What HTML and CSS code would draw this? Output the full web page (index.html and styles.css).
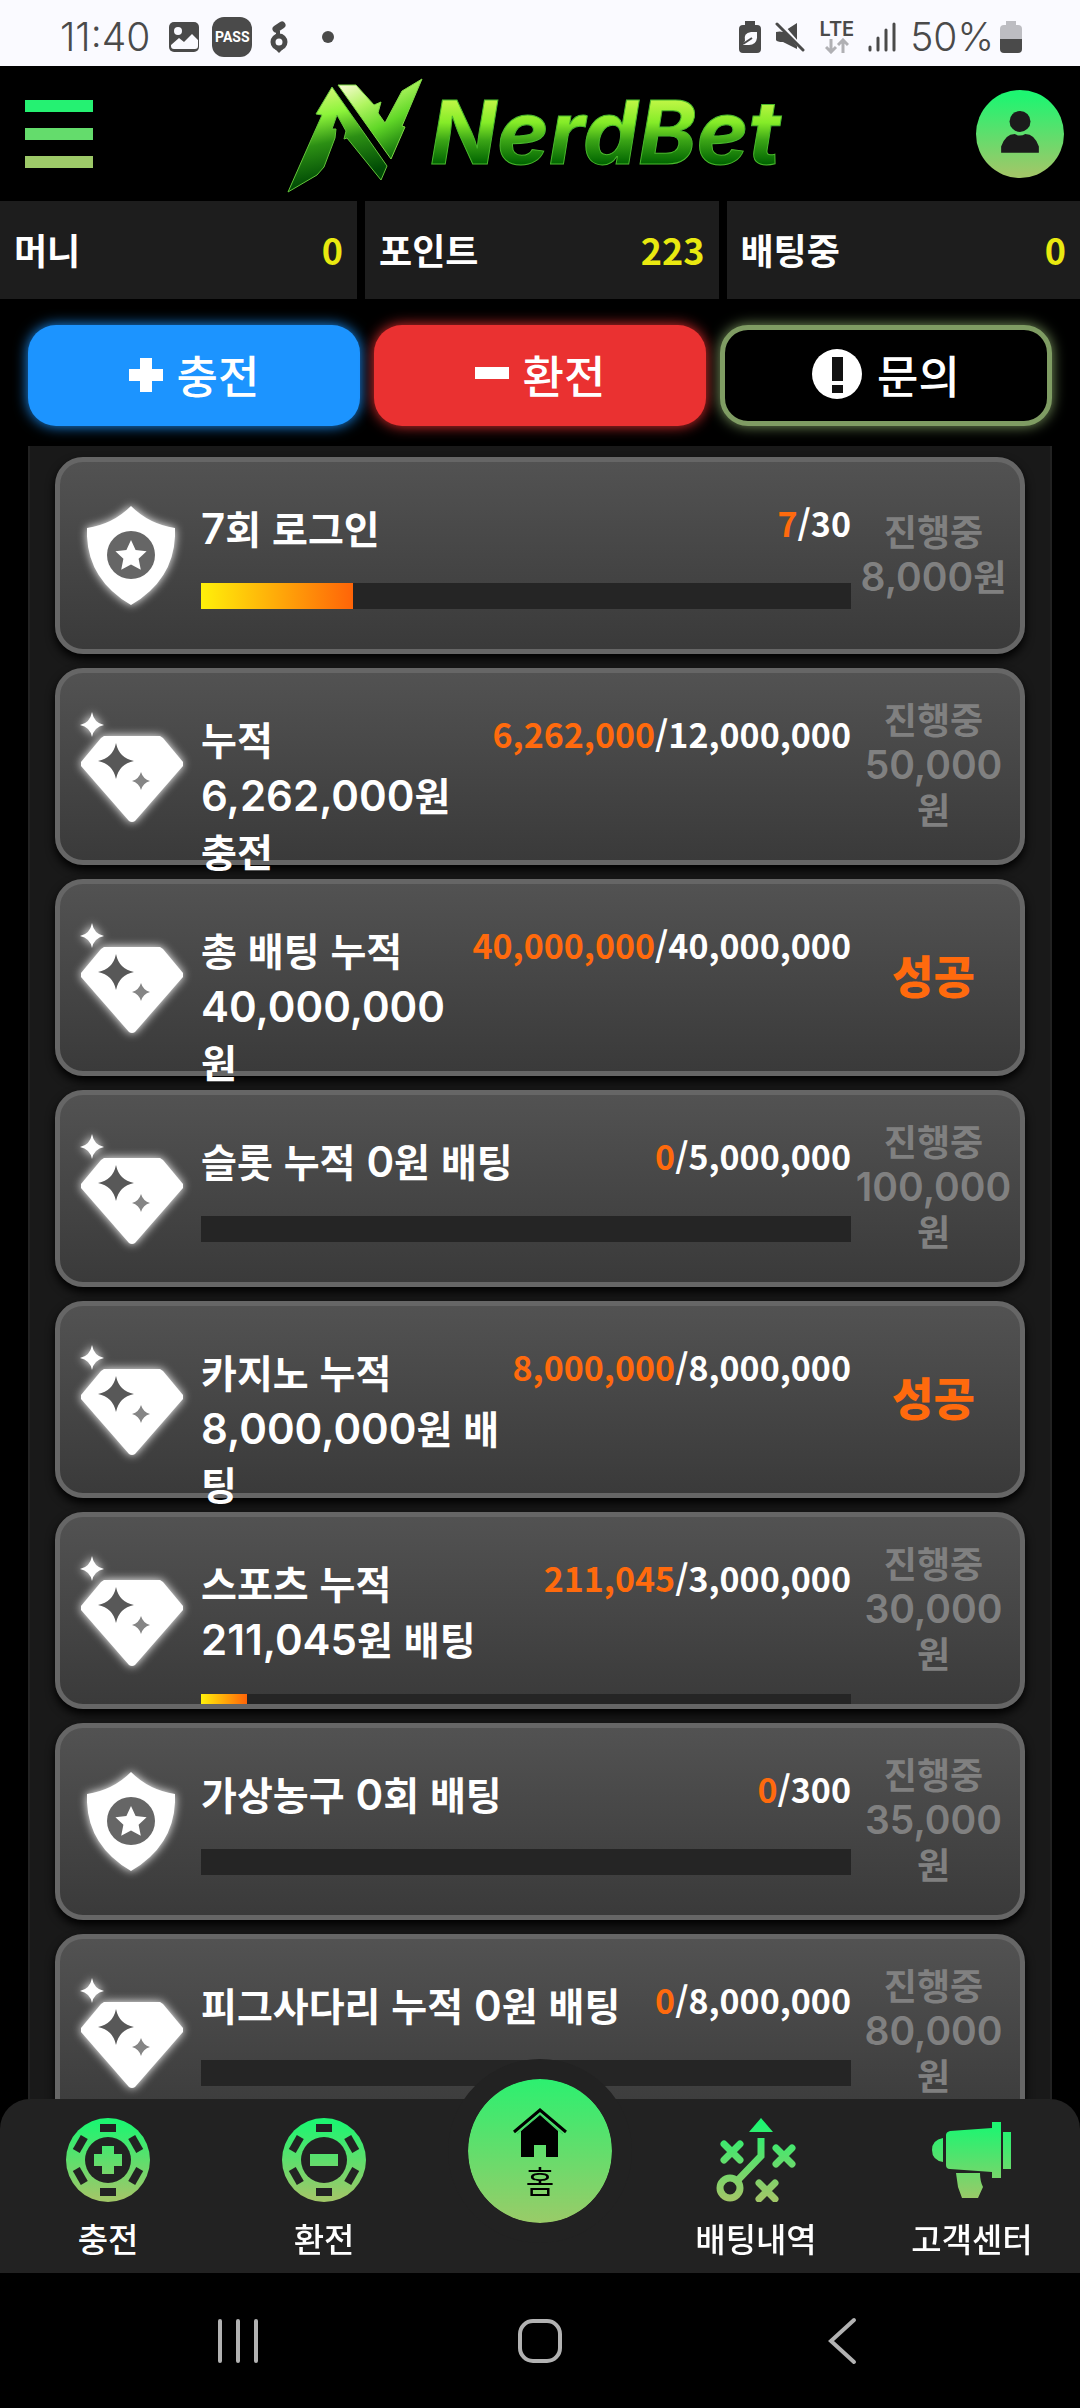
FILE: index.html
```html
<!DOCTYPE html>
<html lang="ko">
<head>
<meta charset="utf-8">
<meta name="viewport" content="width=device-width, initial-scale=1">
<title>NerdBet</title>
<link rel="stylesheet" href="styles.css">
</head>
<body>
<div class="app">
  <div class="status-bar">
    <div class="status-group status-left">
      <span class="clock">11:40</span>
      <svg width="32" height="32" viewBox="0 0 32 32"><rect x="1" y="1" width="30" height="30" rx="5" fill="#4a4a4a"/><circle cx="10" cy="10" r="4" fill="#fafaff"/><path d="M3 24l8-7 5 4 8-8 6 6v6q0 3-3 3H6q-3 0-3-3z" fill="#fafaff"/></svg>
      <span class="pass">PASS</span>
      <svg class="ring" width="18" height="32" viewBox="0 0 18 32"><circle cx="9" cy="21" r="6" fill="none" stroke="#4a4a4a" stroke-width="5"/><path d="M5 28l4 4 4-4z" fill="#4a4a4a"/><path d="M6 8l6-4" stroke="#4a4a4a" stroke-width="7" stroke-linecap="round"/><path d="M8 10v6" stroke="#4a4a4a" stroke-width="4"/></svg>
      <span class="dot"></span>
    </div>
    <div class="status-group status-right">
      <svg width="22" height="32" viewBox="0 0 22 32"><path d="M6 0h10v4h2q4 0 4 4v20q0 4-4 4H4q-4 0-4-4V8q0-4 4-4h2z" fill="#4a4a4a"/><path d="M18 11v6q-1 7-8 7H4q0-2 2-4-2-8 6-9z" fill="#fafaff"/><path d="M4 23l9-6" stroke="#4a4a4a" stroke-width="2"/></svg>
      <svg width="30" height="30" viewBox="0 0 30 30"><path d="M1 10q4-1 7 0l14-9v26L8 20q-6 0-7-2z" fill="#4a4a4a"/><path d="M3 -1l27 31" stroke="#fafaff" stroke-width="4"/><path d="M2 2l26 26" stroke="#4a4a4a" stroke-width="3" stroke-linecap="round"/></svg>
      <span class="lte"><span>LTE</span><svg width="24" height="16" viewBox="0 0 24 16"><path d="M6 1v13M1 9l5 5 5-5M18 15V2M13 7l5-5 5 5" fill="none" stroke="#b0b0b4" stroke-width="3"/></svg></span>
      <svg width="28" height="32" viewBox="0 0 28 32"><path d="M2 26v3M10 17v12M18 9v20M26 3v26" stroke="#4a4a4a" stroke-width="3" stroke-linecap="round"/></svg>
      <span class="battery">50%</span>
      <svg width="22" height="32" viewBox="0 0 22 32"><path d="M6 0h10v4h2q4 0 4 4v10H0V8q0-4 4-4h2z" fill="#bdbdc2"/><path d="M0 18h22v10q0 4-4 4H4q-4 0-4-4z" fill="#4a4a4a"/></svg>
    </div>
  </div>

  <header class="header">
    <button class="icon-button" aria-label="메뉴">
      <span class="menu-bar menu-bar-1"></span><span class="menu-bar menu-bar-2"></span><span class="menu-bar menu-bar-3"></span>
    </button>
    <a class="logo" href="#" aria-label="NerdBet">
      <svg width="516" height="124" viewBox="0 0 516 124">
        <defs>
          <linearGradient id="logo-text" gradientUnits="userSpaceOnUse" x1="0" y1="25" x2="0" y2="92"><stop offset="0" stop-color="#c8f84a"/><stop offset=".38" stop-color="#85ec28"/><stop offset=".65" stop-color="#3aa416"/><stop offset="1" stop-color="#006400"/></linearGradient>
          <linearGradient id="logo-left" gradientUnits="userSpaceOnUse" x1="40" y1="15" x2="60" y2="105"><stop offset="0" stop-color="#d8f778"/><stop offset=".3" stop-color="#8cf43a"/><stop offset=".6" stop-color="#2c8f14"/><stop offset="1" stop-color="#004b05"/></linearGradient>
          <linearGradient id="logo-right" gradientUnits="userSpaceOnUse" x1="70" y1="8" x2="110" y2="87"><stop offset="0" stop-color="#f6fbd0"/><stop offset=".3" stop-color="#b0f560"/><stop offset=".6" stop-color="#62d828"/><stop offset="1" stop-color="#0a6808"/></linearGradient>
          <linearGradient id="lime" gradientUnits="userSpaceOnUse" x1="0" y1="5" x2="0" y2="80"><stop offset="0" stop-color="#1ef571"/><stop offset="1" stop-color="#a0c768"/></linearGradient>
        </defs>
        <path d="M5 120L39 43l-6-1L49 15l55 79-6 14-34-42-3 1 2-8-9-16-5 14h4l-1 9-11 29-7 8z" fill="url(#logo-left)" stroke="#63c43a" stroke-width="1"/>
        <path d="M55 13h18l18 20 7-3-3 11 7 10 17-32 20-12-20 47 3 1-14 32z" fill="url(#logo-right)" stroke="#7fd846" stroke-width="1"/>
        <text class="logo-text" x="147" y="92" fill="url(#logo-text)" stroke="#49b82c" stroke-width="1">NerdBet</text>
      </svg>
    </a>
    <button class="icon-button" aria-label="내 정보">
      <svg width="88" height="88" viewBox="0 0 84 84"><circle cx="42" cy="42" r="42" fill="url(#lime)"/><circle cx="42" cy="30" r="10" fill="#1b1b1b"/><path d="M24 60V54q4-12 13-12 5 3 10 0 9 0 13 12v6z" fill="#1b1b1b"/></svg>
    </button>
  </header>

  <dl class="balances">
    <div class="balance"><dt>머니</dt><dd>0</dd></div>
    <div class="balance"><dt>포인트</dt><dd>223</dd></div>
    <div class="balance"><dt>배팅중</dt><dd>0</dd></div>
  </dl>

  <div class="actions">
    <button class="action action-deposit"><svg width="34" height="34" viewBox="0 0 34 34"><path d="M17 0v34M0 17h34" stroke="#fff" stroke-width="12"/></svg>충전</button>
    <button class="action action-withdraw"><svg width="34" height="34" viewBox="0 0 34 34"><path d="M0 15h34" stroke="#fff" stroke-width="12"/></svg>환전</button>
    <button class="action action-inquiry"><svg width="51" height="51" viewBox="0 0 51 51"><circle cx="25" cy="25" r="25" fill="#fff"/><path d="M20 8h11v24H20zM20 36h11v8H20z" fill="#111"/></svg>문의</button>
  </div>

  <main class="missions">
    <svg class="symbols" width="0" height="0" aria-hidden="true">
      <symbol id="shield" viewBox="0 0 88 99"><path d="M44 0q18 18 44 22 2 50-44 77Q-2 72 0 22 26 18 44 0z" fill="#fff"/><circle cx="44" cy="49" r="24" fill="#666"/><path d="M44 34l4.600 10 11 1.200-8 7.600 2.200 11L44 58.500l-9.800 5.300 2.200-11-8-7.600 11-1.200z" fill="#fff"/></symbol>
      <symbol id="diamond" viewBox="0 0 104 110"><path d="M13 0q2 11 12 13-10 2-12 12Q11 15 1 13 11 11 13 0z" fill="#fff"/><path d="M25 24h56l3 2 20 24v4L56 109q-3 2-6 0L2 54v-4l20-24z" fill="#fff"/><path d="M37 31q3 15 18 18-15 3-18 18-3-15-18-18 15-3 18-18z" fill="#585858"/><path d="M62 60q2 7 9 9-7 2-9 9-2-7-9-9 7-2 9-9z" fill="#858585"/></symbol>
    </svg>

    <article class="mission">
      <svg class="mission-icon" width="88" height="99"><use href="#shield"/></svg>
      <div class="mission-body">
        <div class="mission-head"><h2><b>7</b>회 로그인</h2><p class="count"><em>7</em>/30</p></div>
        <div class="track"><div class="fill" style="width:23.33%"></div></div>
      </div>
      <p class="state">진행중<br><b>8,000</b>원</p>
    </article>

    <article class="mission">
      <svg class="mission-icon" width="104" height="110"><use href="#diamond"/></svg>
      <div class="mission-body">
        <div class="mission-head"><h2>누적<br><b>6,262,000</b>원<br>충전</h2><p class="count"><em>6,262,000</em>/12,000,000</p></div>
        <div class="track"><div class="fill" style="width:52.18%"></div></div>
      </div>
      <p class="state">진행중<br><b>50,000</b><br>원</p>
    </article>

    <article class="mission">
      <svg class="mission-icon" width="104" height="110"><use href="#diamond"/></svg>
      <div class="mission-body">
        <div class="mission-head"><h2>총 배팅 누적<br><b>40,000,000</b><br>원</h2><p class="count"><em>40,000,000</em>/40,000,000</p></div>
        <div class="track"><div class="fill" style="width:100%"></div></div>
      </div>
      <p class="state state-done">성공</p>
    </article>

    <article class="mission">
      <svg class="mission-icon" width="104" height="110"><use href="#diamond"/></svg>
      <div class="mission-body">
        <div class="mission-head"><h2>슬롯 누적 <b>0</b>원 배팅</h2><p class="count"><em>0</em>/5,000,000</p></div>
        <div class="track"></div>
      </div>
      <p class="state">진행중<br><b>100,000</b><br>원</p>
    </article>

    <article class="mission">
      <svg class="mission-icon" width="104" height="110"><use href="#diamond"/></svg>
      <div class="mission-body">
        <div class="mission-head"><h2>카지노 누적<br><b>8,000,000</b>원 배<br>팅</h2><p class="count"><em>8,000,000</em>/8,000,000</p></div>
        <div class="track"><div class="fill" style="width:100%"></div></div>
      </div>
      <p class="state state-done">성공</p>
    </article>

    <article class="mission">
      <svg class="mission-icon" width="104" height="110"><use href="#diamond"/></svg>
      <div class="mission-body">
        <div class="mission-head"><h2>스포츠 누적<br><b>211,045</b>원 배팅</h2><p class="count"><em>211,045</em>/3,000,000</p></div>
        <div class="track"><div class="fill" style="width:7.03%"></div></div>
      </div>
      <p class="state">진행중<br><b>30,000</b><br>원</p>
    </article>

    <article class="mission">
      <svg class="mission-icon" width="88" height="99"><use href="#shield"/></svg>
      <div class="mission-body">
        <div class="mission-head"><h2>가상농구 <b>0</b>회 배팅</h2><p class="count"><em>0</em>/300</p></div>
        <div class="track"></div>
      </div>
      <p class="state">진행중<br><b>35,000</b><br>원</p>
    </article>

    <article class="mission">
      <svg class="mission-icon" width="104" height="110"><use href="#diamond"/></svg>
      <div class="mission-body">
        <div class="mission-head"><h2>피그사다리 누적 <b>0</b>원 배팅</h2><p class="count"><em>0</em>/8,000,000</p></div>
        <div class="track"></div>
      </div>
      <p class="state">진행중<br><b>80,000</b><br>원</p>
    </article>
  </main>

  <nav class="tabs">
    <a class="tab" href="#"><svg width="84" height="84" viewBox="0 0 84 84"><circle cx="42" cy="42" r="42" fill="url(#lime)"/><circle cx="42" cy="42" r="23" fill="#222"/><g fill="#222"><path id="slot" d="M34 6h16v8H34z"/><use href="#slot" transform="rotate(60 42 42)"/><use href="#slot" transform="rotate(120 42 42)"/><use href="#slot" transform="rotate(180 42 42)"/><use href="#slot" transform="rotate(240 42 42)"/><use href="#slot" transform="rotate(300 42 42)"/></g><path d="M36 28h12v8h8v12h-8v8H36v-8h-8V36h8z" fill="url(#lime)"/></svg><span>충전</span></a>
    <a class="tab" href="#"><svg width="84" height="84" viewBox="0 0 84 84"><circle cx="42" cy="42" r="42" fill="url(#lime)"/><circle cx="42" cy="42" r="23" fill="#222"/><g fill="#222"><use href="#slot"/><use href="#slot" transform="rotate(60 42 42)"/><use href="#slot" transform="rotate(120 42 42)"/><use href="#slot" transform="rotate(180 42 42)"/><use href="#slot" transform="rotate(240 42 42)"/><use href="#slot" transform="rotate(300 42 42)"/></g><path d="M28 36h28v12H28z" fill="url(#lime)"/></svg><span>환전</span></a>
    <a class="tab-home" href="#"><svg width="54" height="50" viewBox="0 0 54 50"><path d="M27 8l18 16v26H33V38H21v12H8V24z"/><path d="M1 25L27 3l26 22" fill="none" stroke="#000" stroke-width="3"/><path d="M4 27L27 7l23 20" fill="none" stroke="#3fc465" stroke-width="1"/></svg><span>홈</span></a>
    <a class="tab" href="#"><svg width="80" height="84" viewBox="0 0 80 84"><path d="M45 0l12 14H33z" fill="url(#lime)"/><g fill="none" stroke="url(#lime)" stroke-width="7"><path d="M45 20v18L21 63"/><circle cx="14" cy="70" r="10"/><path d="M8 26l16 16M24 26L8 42M60 30l16 16M76 30L60 46M43 65l16 16M59 65L43 81" stroke-linecap="round"/></g></svg><span>배팅내역</span></a>
    <a class="tab" href="#"><svg width="80" height="84" viewBox="0 -4 80 84"><g fill="url(#lime)"><path d="M11 16v24Q0 38 0 28t11-12zM14 13q0-3 4-4l42-3V0h9v56h-9v-6l-42-3q-4 0-4-4zM71 10h8v37h-8zM24 51h24q0 8 3 14l-5 11H30l-4-11z"/></g></svg><span>고객센터</span></a>
  </nav>

  <div class="system-nav">
    <button class="system-button" aria-label="최근 앱"><svg width="44" height="48" viewBox="0 0 44 48"><path d="M4 4v40M22 4v40M40 4v40" stroke="#b2b2b2" stroke-width="4" stroke-linecap="round"/></svg></button>
    <button class="system-button" aria-label="홈 화면"><svg width="44" height="44" viewBox="0 0 44 44"><rect x="2" y="2" width="40" height="40" rx="13" fill="none" stroke="#b2b2b2" stroke-width="4"/></svg></button>
    <button class="system-button" aria-label="뒤로"><svg width="44" height="48" viewBox="0 0 44 48"><path d="M34 3L11 24l23 21" fill="none" stroke="#b2b2b2" stroke-width="4" stroke-linecap="round"/></svg></button>
  </div>
</div>
</body>
</html>
```
FILE: styles.css
```css
* {
  box-sizing: border-box;
}

body {
  margin: 0;
  background: #000;
  color: #fff;
  font-family: "Noto Sans CJK KR", sans-serif;
}

button {
  padding: 0;
  border: 0;
  background: none;
  color: inherit;
  font: inherit;
}

a {
  color: inherit;
  text-decoration: none;
}

h2,
p,
dl,
dd {
  margin: 0;
}

svg {
  display: block;
  flex: none;
}

.app {
  display: flex;
  flex-direction: column;
  height: 100vh;
}

/* Phone status bar */
.status-bar {
  display: flex;
  flex: none;
  justify-content: space-between;
  align-items: center;
  height: 66px;
  padding: 8px 58px 0 60px;
  background: #fafaff;
  color: #4a4a4a;
  font-family: Inter, sans-serif;
}

.status-group {
  display: flex;
  align-items: center;
}

.status-left {
  gap: 12px;
}

.status-right {
  gap: 14px;
}

.clock,
.battery {
  font-size: 39px;
  font-weight: 300;
  line-height: 40px;
}

.clock {
  margin-right: 6px;
}

.battery {
  margin-right: -8px;
}

.pass {
  width: 40px;
  border-radius: 12px;
  background: #4a4a4a;
  color: #fff;
  font: bold 14px/40px Roboto, sans-serif;
  text-align: center;
}

.ring {
  margin-left: 6px;
}

.dot {
  width: 12px;
  height: 12px;
  margin-left: 22px;
  border-radius: 50%;
  background: #4a4a4a;
}

.lte {
  display: flex;
  flex-direction: column;
  align-items: center;
  font-size: 20px;
  font-weight: 600;
  line-height: 18px;
}

/* Site header */
.header {
  display: flex;
  flex: none;
  justify-content: space-between;
  align-items: center;
  height: 135px;
  padding: 0 16px 0 25px;
}

.icon-button {
  display: flex;
  flex-direction: column;
  gap: 16px;
}

.menu-bar {
  width: 68px;
  height: 12px;
}

.menu-bar-1 {
  background: #25f172;
}

.menu-bar-2 {
  background: #64dc6c;
}

.menu-bar-3 {
  background: #9dc968;
}

.logo {
  margin-left: 12px;
}

.logo-text {
  font: italic 700 88px Inter, sans-serif;
}

/* Balances */
.balances {
  display: grid;
  flex: none;
  grid-template-columns: 101fr 100fr 100fr;
  gap: 8px;
}

.balance {
  display: flex;
  justify-content: space-between;
  align-items: center;
  height: 98px;
  padding: 0 14px 2px;
  background: #1d1d1d;
  font-size: 36px;
  font-weight: 700;
}

.balance dd {
  color: #e9e910;
}

/* Deposit, withdraw and inquiry */
.actions {
  display: grid;
  flex: none;
  grid-template-columns: repeat(3, 1fr);
  gap: 14px;
  padding: 26px 28px 20px;
}

.action {
  display: flex;
  justify-content: center;
  align-items: center;
  gap: 14px;
  height: 101px;
  padding-bottom: 2px;
  border-radius: 28px;
  font-size: 45px;
  font-weight: 500;
}

.action-deposit {
  background: #1c94ff;
  box-shadow: 0 0 14px #1c94ff;
}

.action-withdraw {
  background: #ea3131;
  box-shadow: 0 0 14px #ea3131;
}

.action-inquiry {
  border: 5px solid #7f9c63;
  background: #000;
  box-shadow: 0 0 14px #7f9c63;
}

/* Mission list */
.missions {
  display: flex;
  flex: 1;
  flex-direction: column;
  gap: 14px;
  min-height: 0;
  margin: 0 28px -30px;
  padding: 11px 25px;
  overflow-y: auto;
  border: solid #222;
  border-width: 0 2px;
  background: #191919;
  scrollbar-width: none;
}

.symbols {
  position: absolute;
}

.mission {
  display: grid;
  flex: none;
  grid-template-columns: 141px minmax(0, 1fr) 169px;
  height: 197px;
  border: 5px solid #666;
  border-radius: 28px;
  background: linear-gradient(#525252, #3a3a3a);
  box-shadow: 0 5px 10px #000;
}

.mission-icon {
  place-self: center;
  filter: drop-shadow(0 0 5px #fff);
}

.mission-body {
  display: flex;
  flex-direction: column;
  height: 187px;
  padding-top: 37px;
}

.mission-head {
  display: flex;
  flex: none;
  justify-content: space-between;
  white-space: nowrap;
}

.mission h2 {
  font-size: 39px;
  font-weight: 700;
  line-height: 56px;
}

.mission b {
  font-family: Inter, sans-serif;
  font-size: 42px;
  font-weight: 600;
  line-height: 1;
}

.count {
  font-size: 34px;
  font-weight: 700;
  line-height: 48px;
}

.count em {
  color: #ff6a0d;
  font-style: normal;
}

.track {
  flex: 0 1 26px;
  min-height: 0;
  margin-top: 28px;
  background: #252525;
}

.fill {
  height: 100%;
  background: linear-gradient(90deg, #fff00a, #ff6408);
}

.mission .state {
  align-self: center;
  padding: 0 4px 6px 0;
  color: #808080;
  font-size: 36px;
  font-weight: 700;
  line-height: 45px;
  text-align: center;
  white-space: nowrap;
}

.mission .state b {
  font-size: 39px;
}

.mission .state-done {
  color: #ff6a0d;
  font-size: 45px;
  font-weight: 900;
}

/* Bottom tabs */
.tabs {
  position: relative;
  display: grid;
  flex: none;
  grid-template-columns: repeat(5, 1fr);
  justify-items: center;
  height: 174px;
  padding-top: 19px;
  border-radius: 30px 30px 0 0;
  background: #222;
  font-size: 33px;
  font-weight: 500;
}

.tab {
  display: flex;
  flex-direction: column;
  align-items: center;
  gap: 14px;
  line-height: 44px;
}

.tab-home {
  display: flex;
  flex-direction: column;
  align-items: center;
  width: 184px;
  height: 184px;
  margin-top: -59px;
  padding-top: 28px;
  border: 20px solid #222;
  border-radius: 50%;
  background: linear-gradient(#2cf070, #9acb68) padding-box;
  color: #000;
  font-size: 31px;
  font-weight: 400;
  line-height: 46px;
}

/* Phone navigation keys */
.system-nav {
  display: grid;
  flex: none;
  grid-template-columns: repeat(3, 302px);
  justify-content: center;
  height: 135px;
}

.system-button {
  display: flex;
  justify-content: center;
  align-items: center;
}
```
